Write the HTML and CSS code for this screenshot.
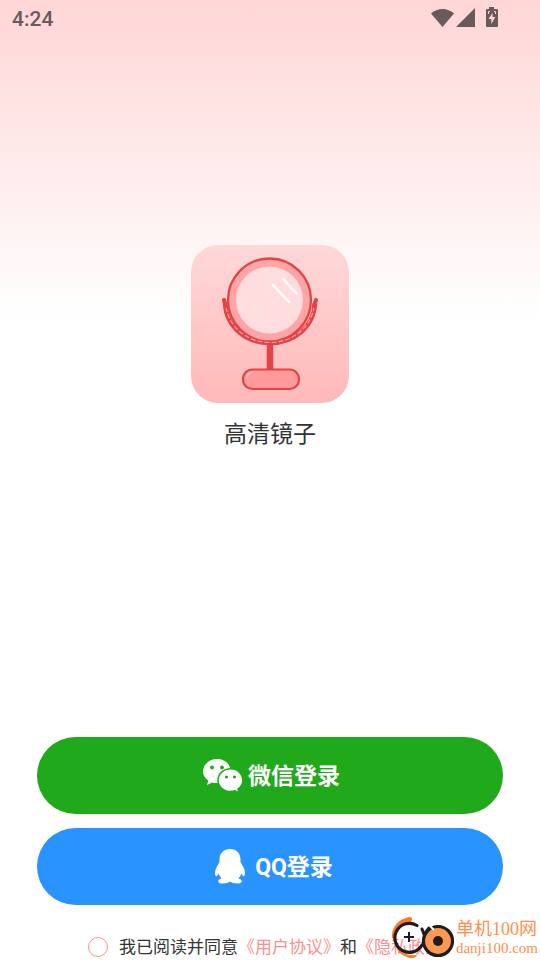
FILE: index.html
```html
<!DOCTYPE html>
<html lang="zh-CN">
<head>
<meta charset="utf-8">
<meta name="viewport" content="width=device-width, initial-scale=1">
<title>高清镜子</title>
<link rel="stylesheet" href="styles.css">
</head>
<body>
<div class="screen">
  <header class="status">
    <span class="clock">4:24</span>
    <svg class="status-icons" width="68" height="22" viewBox="0 0 68 22" aria-hidden="true">
      <path d="M0 6.500C6.500.400 16.500.400 23 6.500L11.500 20z"/>
      <path d="M44 1v19H25z"/>
      <path fill-rule="evenodd" d="M58 0h5v2h3q1 0 1 1v16q0 1-1 1H56q-1 0-1-1V3q0-1 1-1h2zM61.500 6L57.500 12h2.800v5l4-7h-2.800z"/>
      <path d="M57.500 7V4.500H59M64.500 7V4.500H63" fill="none" stroke="#ffd9d9"/>
    </svg>
  </header>
  <main class="brand">
    <svg class="logo" viewBox="0 0 158 158" role="img" aria-label="高清镜子">
      <defs>
        <linearGradient id="tile" x1="0" y1="0" x2="0" y2="1">
          <stop offset="0" stop-color="#ffd8d8"/><stop offset="1" stop-color="#ffb9b9"/>
        </linearGradient>
      </defs>
      <rect width="158" height="158" rx="27" fill="url(#tile)"/>
      <path d="M79 98v27" stroke="#e24446" stroke-width="6.500"/>
      <path d="M34 58C35 82 55 98 79 98S123 82 124 58" fill="none" stroke="#e24446" stroke-width="4.500"/>
      <circle cx="78.500" cy="55" r="41.500" fill="#ffa5a5" stroke="#e24446" stroke-width="2.300"/>
      <path d="M35 62C38 82 56 97.500 79 97.500S120 82 123 62" fill="none" stroke="#ff9a9a" stroke-width="1.200" stroke-dasharray="5 2"/>
      <circle cx="78.500" cy="55" r="33.500" fill="#ffdcde"/>
      <path d="M82 40l16 17M92 34l13 14" stroke="#fff" stroke-width="2.500" stroke-linecap="round"/>
      <path d="M33 55l2 6M125 55l-2 6" stroke="#e24446" stroke-width="4" stroke-linecap="round"/>
      <rect x="52" y="124.500" width="56" height="19.500" rx="9.500" fill="#ff9a9c" stroke="#e24446" stroke-width="2.200"/>
      <path d="M55 134q1-6 7-7" fill="none" stroke="#ffc0c0" stroke-width="1.500"/>
    </svg>
    <h1 class="name">高清镜子</h1>
  </main>
  <section class="actions">
    <button class="login wechat" type="button">
      <svg width="40" height="34" viewBox="0 0 40 34" aria-hidden="true">
        <path fill="#fff" d="M14 0C6.300 0 0 5.500 0 12.500c0 3.800 2 6.800 5.300 9L4 26l5-2.600c2 .600 4 .800 6 .600C32 24 32 0 14 0z"/>
        <path fill="#fff" stroke="#20aa1b" stroke-width="1.500" d="M27.500 9.800C20.500 9.800 15 14.900 15 21.200S20.500 32.500 27.500 32.500c1.700 0 3.200-.300 4.600-.800L36 34l-1-4c2.800-2 4.800-4.900 4.800-8.700 0-6.500-5.300-11.500-12.300-11.500z"/>
        <g fill="#20aa1b"><circle cx="9" cy="8.500" r="1.900"/><circle cx="19" cy="8.500" r="1.900"/><circle cx="23.500" cy="18" r="1.600"/><circle cx="31.500" cy="18" r="1.600"/></g>
      </svg>
      <span>微信登录</span>
    </button>
    <button class="login qq" type="button">
      <svg width="30" height="35" viewBox="0 0 30 35" aria-hidden="true">
        <path fill="#fff" d="M15 0C8.500 0 4.500 4.500 4.500 10.500v2.500C2.500 16.500 0 20 0 24c0 2 .500 3.200 1.200 3.200.900 0 1.800-1.200 2.600-2.600.500 2 1.500 3.500 2.700 4.800-2 .800-3.300 1.300-3.300 2.500C3.200 34 5 34.500 8 34.500c3 0 5.500-.700 7-2 1.500 1.300 4 2 7 2s4.800-.500 4.800-2.600c0-1.200-1.300-1.700-3.300-2.500 1.200-1.300 2.200-2.800 2.700-4.800.800 1.400 1.700 2.600 2.600 2.600.700 0 1.200-1.200 1.200-3.200 0-4-2.500-7.500-4.500-11v-2.500C25.500 4.500 21.500 0 15 0z"/>
      </svg>
      <span>QQ登录</span>
    </button>
  </section>
  <footer class="consent">
    <input class="tick" type="checkbox" id="agree">
    <p class="terms"><label for="agree">我已阅读并同意</label><a href="#terms">《用户协议》</a>和<a href="#privacy">《隐私政策》</a></p>
  </footer>
  <aside class="mark">
    <svg width="64" height="44" viewBox="0 0 64 44" aria-hidden="true">
      <path fill="#ff7a22" d="M1 22C0 12 7 4 15 2c3-2 7-1 6 2l-1 2C10 7 4 13 4 23zM4 28c4 8 11 12 22 11-2 4-6 4-10 2C10 39 5 34 4 28z"/>
      <path d="M26 9.500A14.500 14.500 0 1 0 31 29" fill="none" stroke="#211c20" stroke-width="3.200" stroke-linecap="round"/>
      <path d="M18 16v10M13 21h10" stroke="#211c20" stroke-width="2"/>
      <path d="M31 13l3 8M38 12l-3 4" stroke="#211c20" stroke-width="3" stroke-linecap="round"/>
      <circle cx="47" cy="25" r="14.500" fill="#ff9850" stroke="#211c20" stroke-width="3.200"/>
      <path d="M39 10l4 4" stroke="#fff" stroke-width="2"/>
      <circle cx="47" cy="25" r="5" fill="#211c20"/>
    </svg>
    <span class="mark-text"><span class="mark-name">单机100网</span><span class="mark-site">danji100.com</span></span>
  </aside>
</div>
</body>
</html>
```
FILE: styles.css
```css
* { box-sizing: border-box; }
body {
  margin: 0;
  background: #fff;
  color: #333;
  font-family: Roboto, "Noto Sans CJK SC", sans-serif;
}
.screen {
  position: relative;
  display: flex;
  flex-direction: column;
  min-height: 100vh;
  overflow: hidden;
  background: linear-gradient(#ffd6d6, #fff 320px);
}
.status {
  display: flex;
  justify-content: space-between;
  align-items: center;
  height: 36px;
  padding: 0 41px 0 12px;
  color: #6b5a5b;
}
.clock { padding-top: 2px; font-size: 21px; font-weight: 500; }
.status-icons { fill: #6b5a5b; }
.brand {
  flex: 1;
  display: flex;
  flex-direction: column;
  align-items: center;
  padding-top: 209px;
}
.logo { width: 158px; height: 158px; }
.name {
  margin: 15px 0 0;
  font-size: 23px;
  line-height: 34px;
  font-weight: 400;
}
.actions {
  display: flex;
  flex-direction: column;
  gap: 14px;
  padding: 0 37px;
}
.login {
  display: flex;
  align-items: center;
  justify-content: center;
  gap: 5px;
  width: 100%;
  height: 77px;
  padding: 0 0 0 3px;
  border: 0;
  border-radius: 39px;
  color: #fff;
  font: bold 23px/34px Roboto, "Noto Sans CJK SC", sans-serif;
}
.login span { padding-top: 2px; }
.wechat { background: #20aa1b; }
.qq { gap: 10px; padding-left: 8px; background: #2994ff; }
.consent {
  display: flex;
  align-items: center;
  gap: 11px;
  padding: 28px 0 0 88px;
  height: 55px;
}
.tick {
  appearance: none;
  flex: none;
  width: 20px;
  height: 20px;
  margin: 0;
  border: 1px solid #ff8f8f;
  border-radius: 50%;
}
.tick:checked { background: #ff8f8f; }
.terms {
  margin: 0;
  font-size: 17px;
  line-height: 26px;
  white-space: nowrap;
}
.terms a { color: #ff8f8f; text-decoration: none; }
.mark {
  position: absolute;
  right: 2px;
  bottom: 0;
  display: flex;
  align-items: center;
  gap: 1px;
  color: #ff8f4a;
}
.mark-text { display: flex; flex-direction: column; }
.mark-name { font: 18px/20px "Liberation Serif", "Noto Sans CJK SC", serif; }
.mark-site { font: 15px/18px "Liberation Serif", serif; }
```
